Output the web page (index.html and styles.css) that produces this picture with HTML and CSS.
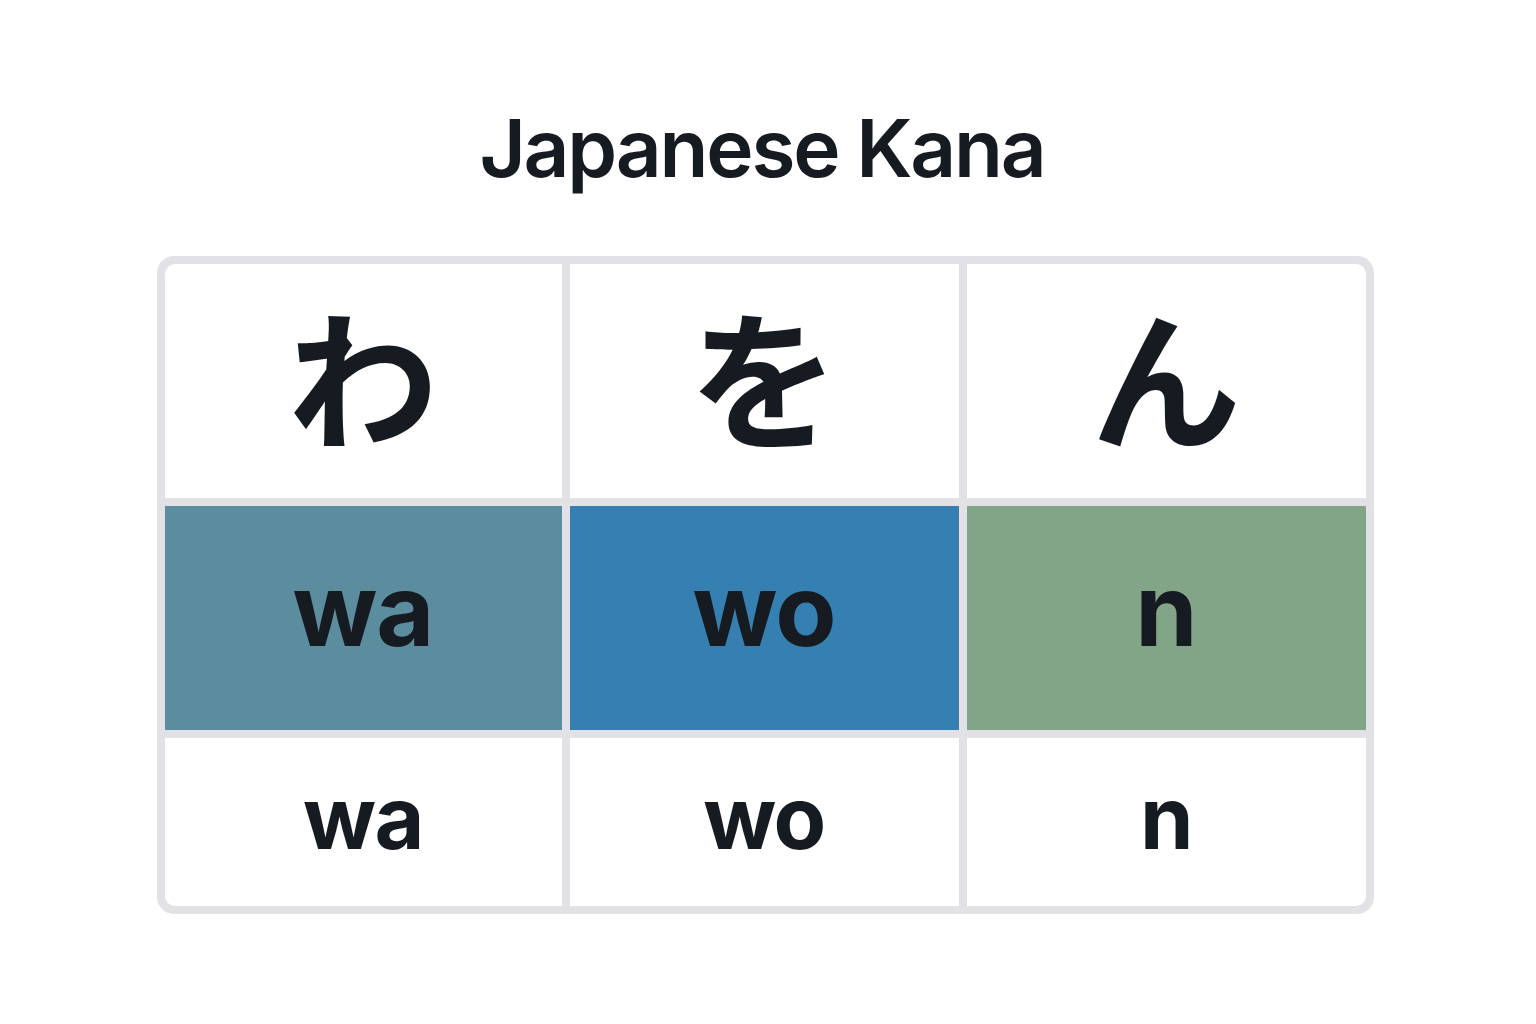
FILE: index.html
```html
<!DOCTYPE html>
<html lang="ja">
<head>
<meta charset="utf-8">
<title>Japanese Kana</title>
<link rel="stylesheet" href="styles.css">
</head>
<body>
<main class="page">
  <h1 class="title">Japanese Kana</h1>
  <div class="kana-table">
    <div class="cell kana">わ</div>
    <div class="cell kana">を</div>
    <div class="cell kana">ん</div>
    <div class="cell romaji c1">wa</div>
    <div class="cell romaji c2">wo</div>
    <div class="cell romaji c3">n</div>
    <div class="cell small">wa</div>
    <div class="cell small">wo</div>
    <div class="cell small">n</div>
  </div>
</main>
</body>
</html>
```

FILE: styles.css
```css
html, body {
  margin: 0;
  padding: 0;
  background: #ffffff;
}

body {
  font-family: Inter, "Noto Sans", "Liberation Sans", sans-serif;
  color: #161a21;
}

.page {
  display: flex;
  flex-direction: column;
  align-items: center;
  padding-top: 108px;
}

.title {
  margin: 0 0 68px 0;
  font-size: 80px;
  line-height: 1;
  font-weight: 600;
  letter-spacing: -2.2px;
  transform: translateX(-6px);
}

.kana-table {
  display: grid;
  grid-template-columns: 397px 389px 399px;
  grid-template-rows: 234px 224px 168px;
  gap: 8px;
  padding: 8px;
  background: #e2e2e6;
  border-radius: 17px;
  transform: translateX(-3px);
}

.cell {
  display: flex;
  align-items: center;
  justify-content: center;
  background: #ffffff;
}

.kana-table .cell:nth-child(1) { border-top-left-radius: 10px; }
.kana-table .cell:nth-child(3) { border-top-right-radius: 10px; }
.kana-table .cell:nth-child(7) { border-bottom-left-radius: 10px; }
.kana-table .cell:nth-child(9) { border-bottom-right-radius: 10px; }

.kana {
  font-family: "Noto Sans CJK JP", "Noto Sans CJK SC", sans-serif;
  font-size: 150px;
  font-weight: 700;
  line-height: 1;
  padding-bottom: 16px;
}

.romaji {
  font-size: 100px;
  font-weight: 700;
  line-height: 1;
  letter-spacing: -1px;
  padding-bottom: 16px;
}

.c1 { background: #5b8d9f; }
.c2 { background: #3580b0; }
.c3 { background: #82a588; }

.small {
  font-size: 86px;
  font-weight: 700;
  line-height: 1;
  letter-spacing: -1.5px;
  padding-bottom: 8px;
}
```
